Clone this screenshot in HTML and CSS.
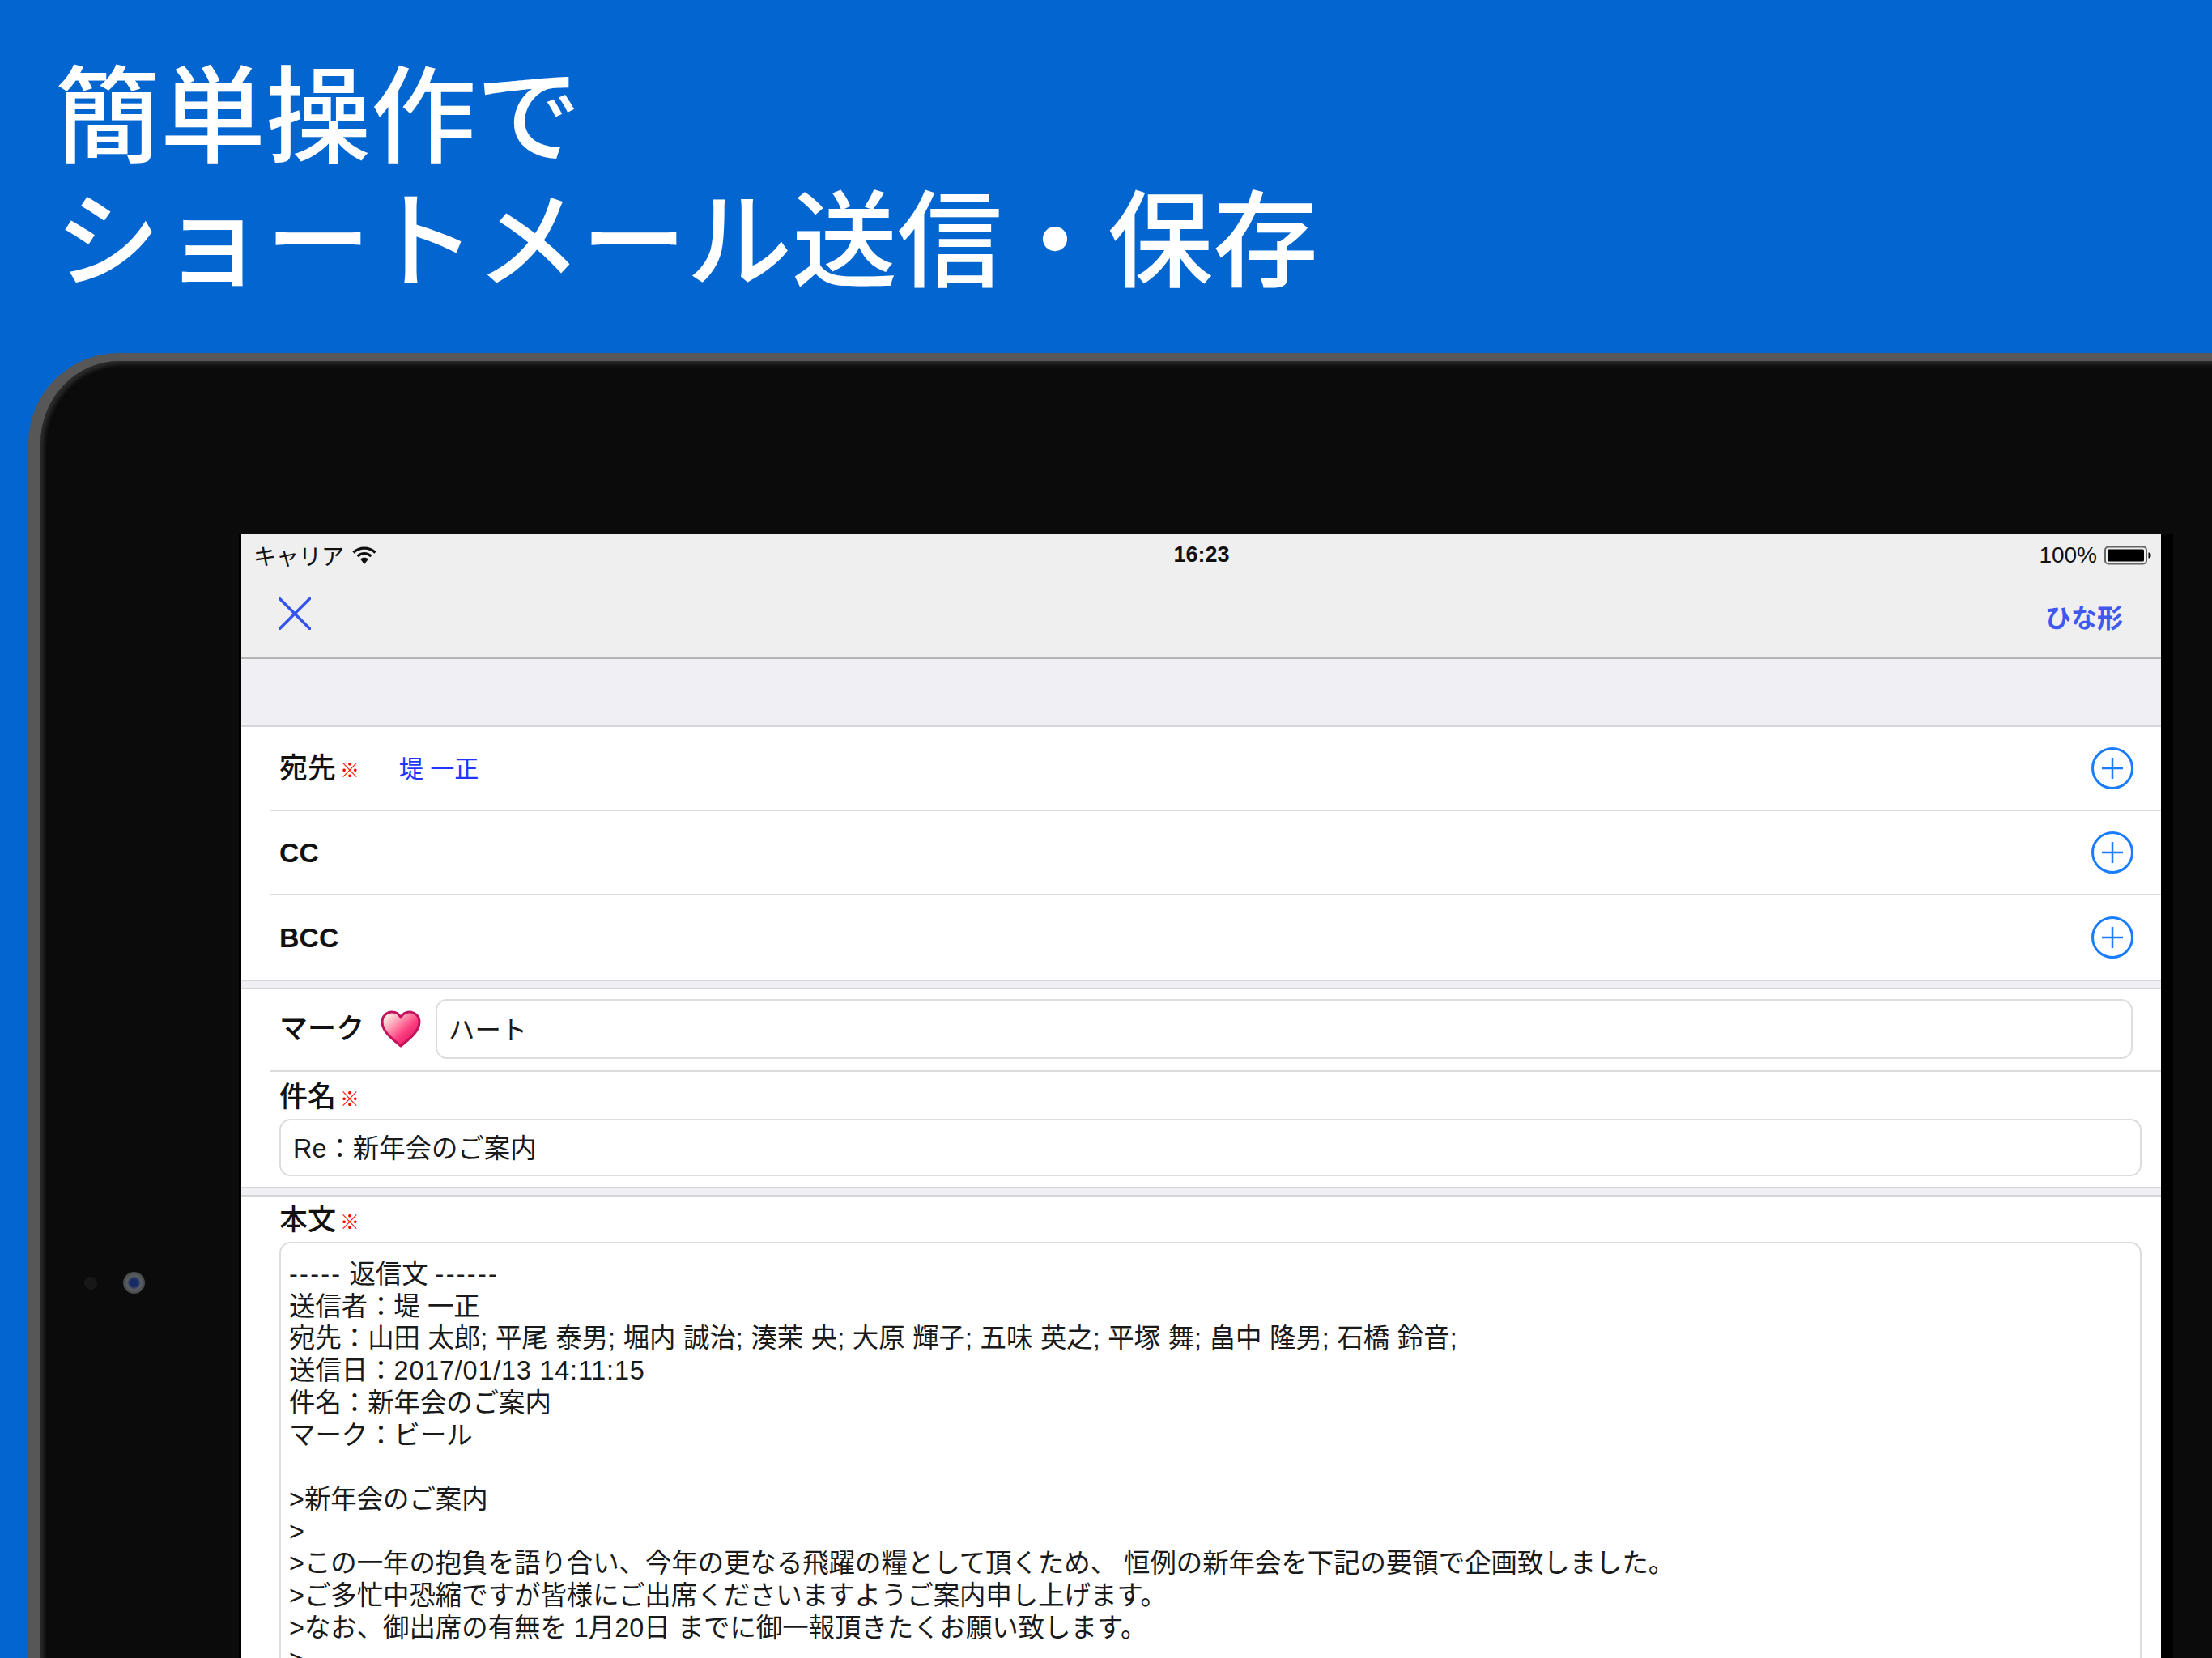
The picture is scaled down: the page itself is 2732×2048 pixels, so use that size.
FILE: index.html
```html
<!DOCTYPE html>
<html lang="ja">
<head>
<meta charset="utf-8">
<title>簡単操作でショートメール送信・保存</title>
<link rel="stylesheet" href="styles.css">
</head>
<body>
<header class="hero">
  <h1>簡単操作で<br>ショートメール送信・保存</h1>
</header>
<section class="device">
  <span class="sensor"></span>
  <span class="camera"></span>
  <div class="screen">
    <div class="status">
      <div class="status-left">
        <span>キャリア</span>
        <svg class="wifi" viewBox="0 0 30 24"><path d="M1.5 8.5C9 1.2 21 1.2 28.500 8.500" class="wifi-arc"/><path d="M6.500 13C11.500 8.500 18.500 8.500 23.500 13" class="wifi-arc"/><path d="M10 16.600C13 14 17 14 20 16.600L15 23Z" class="wifi-fill"/></svg>
      </div>
      <div class="status-time">16:23</div>
      <div class="status-right">
        <span>100%</span>
        <svg class="battery" viewBox="0 0 58 24"><rect x="1" y="1.500" width="51" height="21" rx="4" class="batt-shell"/><rect x="4" y="4.500" width="45" height="15" rx="1.500" class="batt-fill"/><path d="M54.500 8.500C57 8.500 57.500 10 57.500 12S57 15.500 54.500 15.500Z" class="batt-fill"/></svg>
      </div>
    </div>
    <nav class="navbar">
      <svg class="close" viewBox="0 0 40 40"><path d="M1.500 1.500L38.500 38.500M38.500 1.500L1.500 38.500"/></svg>
      <span class="template">ひな形</span>
    </nav>
    <div class="band band-top"></div>
    <div class="rows">
      <div class="row">
        <span class="label">宛先</span><span class="req">※</span>
        <span class="recipient">堤 一正</span>
        <svg class="plus" viewBox="0 0 52 52"><ellipse cx="26" cy="26" rx="24.500" ry="24.500"/><path d="M13 26H39M26 13V39"/></svg>
      </div>
      <div class="row">
        <span class="label label-latin">CC</span>
        <svg class="plus" viewBox="0 0 52 52"><ellipse cx="26" cy="26" rx="24.500" ry="24.500"/><path d="M13 26H39M26 13V39"/></svg>
      </div>
      <div class="row">
        <span class="label label-latin">BCC</span>
        <svg class="plus" viewBox="0 0 52 52"><ellipse cx="26" cy="26" rx="24.500" ry="24.500"/><path d="M13 26H39M26 13V39"/></svg>
      </div>
    </div>
    <div class="band band-thin"></div>
    <div class="mark-row">
      <span class="label">マーク</span>
      <svg class="heart" viewBox="0 0 50 46">
        <defs>
          <linearGradient id="heartFill" x1="0.100" y1="0.100" x2="0.800" y2="0.800">
            <stop offset="0" stop-color="#fff0e6"/>
            <stop offset="0.300" stop-color="#ffa9bb"/>
            <stop offset="0.700" stop-color="#fb3f7f"/>
            <stop offset="1" stop-color="#e91e66"/>
          </linearGradient>
        </defs>
        <path d="M25 44C14 35 2 26 2 14.500 2 7 7.500 2 14 2 19 2 23 4.500 25 9 27 4.500 31 2 36 2 42.500 2 48 7 48 14.500 48 26 36 35 25 44Z" fill="url(#heartFill)" stroke="#c4125c" stroke-width="3" stroke-linejoin="round"/>
      </svg>
      <div class="field field-mark">ハート</div>
    </div>
    <div class="subject">
      <div class="caption"><span class="label">件名</span><span class="req">※</span></div>
      <div class="field field-subject">Re：新年会のご案内</div>
    </div>
    <div class="band band-thin"></div>
    <div class="message">
      <div class="caption"><span class="label">本文</span><span class="req">※</span></div>
      <div class="field-body">
        <div class="line"><span class="dashes">-----</span> 返信文 <span class="dashes">------</span></div>
        <div class="line">送信者：堤 一正</div>
        <div class="line line-names">宛先：山田 太郎; 平尾 泰男; 堀内 誠治; 湊茉 央; 大原 輝子; 五味 英之; 平塚 舞; 畠中 隆男; 石橋 鈴音;</div>
        <div class="line">送信日：<span class="digits">2017/01/13 14:11:15</span></div>
        <div class="line">件名：新年会のご案内</div>
        <div class="line">マーク：ビール</div>
        <div class="line">&nbsp;</div>
        <div class="line">&gt;新年会のご案内</div>
        <div class="line">&gt;</div>
        <div class="line">&gt;この一年の抱負を語り合い、今年の更なる飛躍の糧として頂くため、 恒例の新年会を下記の要領で企画致しました。</div>
        <div class="line">&gt;ご多忙中恐縮ですが皆様にご出席くださいますようご案内申し上げます。</div>
        <div class="line">&gt;なお、御出席の有無を 1月20日 までに御一報頂きたくお願い致します。</div>
        <div class="line">&gt;</div>
      </div>
    </div>
  </div>
</section>
</body>
</html>
```

FILE: styles.css
```css
* { box-sizing: border-box; }
html, body { margin: 0; padding: 0; }
body {
  width: 2732px;
  height: 2048px;
  overflow: hidden;
  background: #0366d0;
  font-family: "Liberation Sans", "Noto Sans CJK JP", sans-serif;
  color: #111;
}
.hero { height: 436px; padding: 56px 0 0 68px; }
.hero h1 {
  margin: 0;
  font-family: "Noto Sans CJK JP", sans-serif;
  font-size: 130px;
  font-weight: 500;
  line-height: 154px;
  color: #fff;
  white-space: nowrap;
}
.device {
  position: relative;
  width: 2800px;
  height: 1612px;
  margin-left: 35px;
  padding: 214px 0 0 248px;
  background: #0b0b0b;
  border-top: 10px solid #575757;
  border-left: 15px solid #575757;
  border-top-left-radius: 112px;
  box-shadow: inset 4px 4px 5px #2c2c2c;
  overflow: hidden;
}
.camera {
  position: absolute;
  left: 102px;
  top: 1125px;
  width: 27px;
  height: 27px;
  border-radius: 50%;
  background: radial-gradient(circle, #182a66 0 25%, #5c5f62 45%, #2a2b2c 100%);
}
.sensor {
  position: absolute;
  left: 54px;
  top: 1131px;
  width: 16px;
  height: 16px;
  border-radius: 50%;
  background: #171717;
}
.screen {
  width: 2371px;
  height: 1500px;
  background: #fff;
  box-shadow: 15px 0 0 #000, -3px 0 0 #000;
}
.status {
  display: grid;
  grid-template-columns: 1fr auto 1fr;
  align-items: center;
  height: 50px;
  padding: 1px 12px 0 15px;
  background: #efefef;
  font-size: 28px;
}
.status-left { display: flex; align-items: center; gap: 10px; }
.status-time { font-weight: 700; font-size: 27px; margin-left: -2px; }
.status-right { display: flex; align-items: center; justify-content: flex-end; gap: 9px; }
.wifi { width: 30px; height: 24px; }
.wifi-arc { fill: none; stroke: #111; stroke-width: 3.200; }
.wifi-fill { fill: #111; }
.battery { width: 58px; height: 24px; }
.batt-shell { fill: none; stroke: #666; stroke-width: 2; }
.batt-fill { fill: #000; }
.navbar {
  display: flex;
  align-items: center;
  justify-content: space-between;
  height: 104px;
  padding: 0 47px 6px 46px;
  background: #efefef;
  border-bottom: 2px solid #b4b4b4;
}
.close { width: 40px; height: 40px; }
.close path { fill: none; stroke: #3352ee; stroke-width: 3.500; stroke-linecap: round; }
.template {
  font-size: 32px;
  font-weight: 700;
  color: #3f58f0;
  font-family: "Noto Sans CJK JP", sans-serif;
  margin-top: 6px;
}
.band { background: #efeff4; }
.band-top { height: 84px; border-bottom: 2px solid #d6d6da; }
.band-thin { height: 12px; border-top: 2px solid #d6d6da; border-bottom: 2px solid #d6d6da; }
.row {
  display: flex;
  align-items: center;
  height: 104px;
  margin-left: 35px;
  padding: 0 34px 0 12px;
  border-bottom: 2px solid #dcdcdc;
}
.row:last-child { border-bottom: 0; }
.label { font-size: 35px; font-weight: 500; color: #111; line-height: 1.2; }
.label-latin { font-size: 34px; font-weight: 700; }
.req {
  margin-left: 5px;
  font-size: 24px;
  font-weight: 700;
  color: #f00;
  font-family: "Noto Sans CJK JP", sans-serif;
}
.recipient { margin-left: 49px; font-size: 30px; color: #2233ff; position: relative; top: -2px; }
.plus { width: 52px; height: 52px; margin-left: auto; }
.plus ellipse, .plus path { fill: none; stroke: #1a7dff; }
.plus ellipse { stroke-width: 3; }
.plus path { stroke-width: 2.500; }
.mark-row {
  display: flex;
  align-items: center;
  height: 102px;
  margin-left: 35px;
  padding: 0 35px 2px 12px;
  border-bottom: 2px solid #dcdcdc;
}
.heart { width: 50px; height: 46px; margin-left: 20px; }
.field {
  display: flex;
  align-items: center;
  background: #fff;
  border: 2px solid #dddde0;
  border-radius: 14px;
  font-size: 32.400px;
  color: #1a1a1a;
}
.field-mark { flex: 1; height: 74px; margin-left: 18px; padding: 0 0 4px 14px; }
.subject { height: 142px; padding: 9px 24px 0 47px; }
.caption { display: flex; align-items: center; height: 44px; }
.field-subject { height: 71px; margin-top: 5px; padding: 0 0 4px 15px; }
.message { padding: 7px 24px 0 47px; }
.field-body {
  margin-top: 5px;
  padding: 19px 0 0 10px;
  height: 700px;
  border: 2px solid #dddde0;
  border-radius: 14px;
  font-size: 32.400px;
  line-height: 39.700px;
  color: #1a1a1a;
}
.line { white-space: pre; }
.line-names { word-spacing: 0.600px; }
.dashes { letter-spacing: 2.300px; }
.digits { letter-spacing: 0.800px; }
```
